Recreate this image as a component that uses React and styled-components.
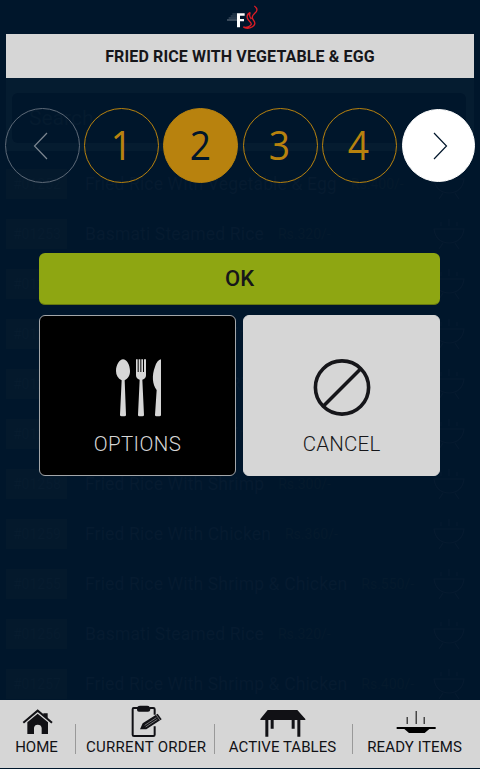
import React from "react";
import styled, { createGlobalStyle } from "styled-components";

const GlobalStyle = createGlobalStyle`
  * { box-sizing: border-box; }
  body { margin: 0; background: #00162b; font-family: Roboto, "Liberation Sans", sans-serif; }
  button { font: inherit; padding: 0; margin: 0; border: 0; background: none; }
  svg { display: block; flex: none; }
`;

const Screen = styled.div`
  position: relative;
  width: 480px;
  height: 769px;
  overflow: hidden;
  background: #00162b;
  display: flex;
  flex-direction: column;
`;

const Backdrop = styled.div`
  height: 700px;
  padding: 78px 6px 0;
  overflow: hidden;
  color: #061b30;
`;

const SearchPanel = styled.div`
  height: 73px;
  padding: 15px 8px 8px 6px;
  background: #051c30;
`;

const SearchField = styled.div`
  height: 50px;
  padding-left: 17px;
  border-radius: 6px;
  background: #00162b;
  color: #051b2f;
  font-size: 21px;
  line-height: 50px;
`;

const DishList = styled.div`
  padding-top: 8px;
`;

const DishRow = styled.div`
  display: flex;
  align-items: center;
  height: 50px;
`;

const DishCode = styled.div`
  flex: none;
  width: 61px;
  height: 30px;
  margin-right: 18px;
  padding-left: 7px;
  background: #04192c;
  color: #071c2f;
  font-size: 14px;
  line-height: 30px;
`;

const DishName = styled.div`
  font-size: 17.5px;
  line-height: 24px;
  letter-spacing: 0.15px;
  white-space: nowrap;
`;

const DishPrice = styled.div`
  margin-left: 14px;
  color: #051a2d;
  font-size: 14px;
  white-space: nowrap;
`;

const DishIcon = styled.svg`
  margin-left: auto;
  margin-right: 9px;
`;

const Dialog = styled.div`
  position: absolute;
  inset: 0 0 69px 0;
  display: flex;
  flex-direction: column;
`;

const LogoBar = styled.div`
  height: 34px;
  display: flex;
  justify-content: center;
  padding-left: 6px;
`;

const Title = styled.h1`
  margin: 0 6px;
  height: 44px;
  background: #d6d6d6;
  color: #16161a;
  font-size: 16px;
  font-weight: 700;
  line-height: 45px;
  letter-spacing: 0.13px;
  text-align: center;
  white-space: nowrap;
`;

const QuantityRow = styled.div`
  margin: 30px 5px 0;
  display: flex;
  align-items: center;
  gap: 4.2px;
  height: 75px;
`;

const Round = styled.button`
  display: flex;
  align-items: center;
  justify-content: center;
  flex: none;
  width: ${(p) => p.$size || 75}px;
  height: ${(p) => p.$size || 75}px;
  border-radius: 50%;
  border: 1px solid ${(p) => p.$line};
  background: ${(p) => p.$fill || "transparent"};
  color: ${(p) => p.$ink};

  &:last-child {
    margin-left: auto;
  }
`;

const Digit = styled.span`
  font-family: "Open Sans", "Noto Sans", sans-serif;
  font-size: 40px;
  line-height: 54px;
  margin: 0 1px 1px 0;
  transform: scaleX(0.93);
`;

const Actions = styled.div`
  margin: 70px 40px 0 39px;
  display: grid;
  grid-template-columns: 196.5px 197px;
  column-gap: 7.5px;
  row-gap: 10px;
  grid-template-rows: 51.5px 161.5px;
`;

const OkButton = styled.button`
  grid-column: 1 / -1;
  border-radius: 6px;
  border-bottom: 1px solid #66770f;
  background: #8ea612;
  color: #16161a;
  font-size: 22px;
  font-weight: 500;
  line-height: 51px;
`;

const Tile = styled.button`
  display: flex;
  flex-direction: column;
  align-items: center;
  padding-top: 43px;
  border-radius: 6px;
  border: 1px solid ${(p) => (p.$dark ? "#a3a6a9" : "#d6d6d6")};
  background: ${(p) => (p.$dark ? "#000" : "#d6d6d6")};
  color: ${(p) => (p.$dark ? "#d6d6d6" : "#16161a")};
`;

const TileLabel = styled.span`
  margin-top: 12px;
  font-size: 20.5px;
  font-weight: 300;
  line-height: 30px;
  letter-spacing: ${(p) => p.$spacing}px;
  margin-right: -${(p) => p.$spacing}px;
`;

const NavBar = styled.nav`
  display: flex;
  height: 68px;
  background: #d6d6d6;
  color: #111115;
`;

const NavItem = styled.a`
  display: flex;
  flex-direction: column;
  align-items: center;
  width: ${(p) => p.$width}px;
  padding-left: ${(p) => p.$left || 0}px;
  padding-right: ${(p) => p.$right || 0}px;
`;

const NavLabel = styled.span`
  font-size: 15px;
  line-height: 20px;
  letter-spacing: ${(p) => p.$spacing}px;
  margin-right: -${(p) => p.$spacing}px;
  white-space: nowrap;
`;

const Divider = styled.div`
  width: 1px;
  height: 30px;
  margin-top: 24px;
  background: #999;
`;

const dishes = [
  ["#01252", "Fried Rice With Vegetable & Egg", "Rs.400/-"],
  ["#01253", "Basmati Steamed Rice", "Rs.320/-"],
  ["#01254", "Fried Rice With Shrimp", "Rs.300/-"],
  ["#01255", "Fried Rice With Shrimp", "Rs.300/-"],
  ["#01256", "Basmati Steamed Rice", "Rs.320/-"],
  ["#01257", "Fried Rice With Shrimp", "Rs.300/-"],
  ["#01258", "Fried Rice With Shrimp", "Rs.300/-"],
  ["#01259", "Fried Rice With Chicken", "Rs.360/-"],
  ["#01255", "Fried Rice With Shrimp & Chicken", "Rs.550/-"],
  ["#01256", "Basmati Steamed Rice", "Rs.320/-"],
  ["#01257", "Fried Rice With Shrimp & Chicken", "Rs.400/-"],
];

const Bowl = () => (
  <DishIcon width="32" height="30" viewBox="0 0 32 30" fill="none" stroke="#061b30" strokeWidth="1.2">
    <path d="M1 10H31C30 19 24 24 16 24S2 19 1 10ZM10 24L6 30M22 24L26 30M8 3V7M16 0V7M24 3V7" />
  </DishIcon>
);

const Logo = () => (
  <svg width="36" height="34" viewBox="0 0 108 102" fill="none">
    <g stroke="#a9b3bd" strokeWidth="2">
      <path d="M22 42H36" opacity=".5" />
      <path d="M17 48H36" opacity=".6" />
      <path d="M11 54H36" opacity=".7" />
      <path d="M6 60H36" />
    </g>
    <path d="M36 40H59V47H45V57H57V64H45V82H36Z" fill="#fff" />
    <path
      d="M88 18C99 26 98 34 88 41C80 48 80 54 85 60C91 67 92 75 81 81C73 86 61 86 55 81C65 84 76 80 79 73C80 67 69 63 67 54C65 46 70 40 76 37M76 37C72 45 73 51 79 57"
      stroke="#db1d25"
      strokeWidth="4"
    />
  </svg>
);

const Chevron = ({ d }) => (
  <svg width="20" height="28" viewBox="0 0 20 28" fill="none" stroke="currentColor" strokeWidth="1.2">
    <path d={d} />
  </svg>
);

const Cutlery = () => (
  <svg width="46" height="58" viewBox="252 161 138 174" overflow="visible" fill="#d6d6d6">
    <path d="M279 162C290 162 300 179 300 197C300 211 294 219 284 225L288 329Q288 333 283 333H275Q270 333 270 329L275 225C264 219 258 210 258 197C258 178 269 162 279 162Z" />
    <path d="M318 162H323V200H326V162H331V200H334V162H339V200H342V162H348V210Q348 220 337 223L342 329Q342 333 337 333H328Q324 333 324 329L329 223Q318 220 318 210Z" />
    <path d="M393 162V329Q393 333 388 333H379Q375 333 375 329L380 254C367 236 365 211 375 184Q381 165 393 162Z" />
  </svg>
);

const Forbidden = () => (
  <svg width="58" height="58" viewBox="0 0 58 58" fill="none" stroke="#16161a" strokeWidth="3.6">
    <circle cx="29" cy="28.5" r="26.6" />
    <path d="M10.5 47L47.5 10" />
  </svg>
);

const Home = () => (
  <svg width="36" height="37" viewBox="58 15 108 111">
    <path d="M71 83L114 47L157 83" fill="none" stroke="#111115" strokeWidth="6" />
    <path d="M131 55H144V72L131 61ZM83 82L114 56L145 82V117H126V99Q125 89 114 89Q104 89 103 99V117H83Z" fill="#111115" />
  </svg>
);

const Order = () => (
  <svg width="34" height="37" viewBox="388 15 102 111">
    <path d="M415 39H402Q399 39 399 43V119Q399 123 403 123H461Q465 123 465 119V94M449 39H461Q465 39 465 43V59" fill="none" stroke="#111115" strokeWidth="6" />
    <path d="M413 36Q416 32 422 32H442Q448 32 450 36L452 44Q451 50 445 50H418Q412 50 412 44Z" fill="#111115" />
    <path d="M421 103L429 85L474 56L486 73L440 103Z" fill="#111115" />
    <path d="M435 91L470 68M438 96L473 73M470 60L481 76" stroke="#d6d6d6" strokeWidth="1.5" />
  </svg>
);

const Table = () => (
  <svg width="46" height="37" viewBox="59 15 138 111" fill="#111115">
    <path d="M82 45H171L195 72V75H180V125H171V75H163V101H154V75H100V101H91V75H84V125H75V75H60V72Z" />
  </svg>
);

const Steaming = () => (
  <svg width="40" height="37" viewBox="466 15 120 111" overflow="visible" fill="#000">
    <path d="M471 96H588V102H569L555 114H508L494 102H471ZM501 66H504V87H501ZM528 48H531V87H528ZM552 66H555V87H552Z" />
  </svg>
);

export default function App() {
  return (
    <>
      <GlobalStyle />
      <Screen>
        <Backdrop>
          <SearchPanel>
            <SearchField>Search</SearchField>
          </SearchPanel>
          <DishList>
            {dishes.map(([code, name, price], i) => (
              <DishRow key={i}>
                <DishCode>{code}</DishCode>
                <DishName>{name}</DishName>
                <DishPrice>{price}</DishPrice>
                <Bowl />
              </DishRow>
            ))}
          </DishList>
        </Backdrop>

        <Dialog>
          <LogoBar>
            <Logo />
          </LogoBar>
          <Title>FRIED RICE WITH VEGETABLE &amp; EGG</Title>
          <QuantityRow>
            <Round $line="#5d6977" $ink="#7d8791" aria-label="Previous">
              <Chevron d="M14 1L1.5 14L14 27" />
            </Round>
            <Round $line="#b8820e" $ink="#b8820e"><Digit>1</Digit></Round>
            <Round $line="#b8820e" $fill="#b8820e" $ink="#00162b"><Digit>2</Digit></Round>
            <Round $line="#b8820e" $ink="#b8820e"><Digit>3</Digit></Round>
            <Round $line="#b8820e" $ink="#b8820e"><Digit>4</Digit></Round>
            <Round $size={73} $line="#fff" $fill="#fff" $ink="#00162b" aria-label="Next">
              <Chevron d="M5 1L17.5 14L5 27" />
            </Round>
          </QuantityRow>
          <Actions>
            <OkButton>OK</OkButton>
            <Tile $dark>
              <Cutlery />
              <TileLabel $spacing={0.4}>OPTIONS</TileLabel>
            </Tile>
            <Tile>
              <Forbidden />
              <TileLabel $spacing={0.2}>CANCEL</TileLabel>
            </Tile>
          </Actions>
        </Dialog>

        <NavBar>
          <NavItem $width={75} $right={2}>
            <Home />
            <NavLabel $spacing={0}>HOME</NavLabel>
          </NavItem>
          <Divider />
          <NavItem $width={138} $left={2}>
            <Order />
            <NavLabel $spacing={0.3}>CURRENT ORDER</NavLabel>
          </NavItem>
          <Divider />
          <NavItem $width={137} $right={2}>
            <Table />
            <NavLabel $spacing={0.05}>ACTIVE TABLES</NavLabel>
          </NavItem>
          <Divider />
          <NavItem $width={127} $right={4}>
            <Steaming />
            <NavLabel $spacing={0.15}>READY ITEMS</NavLabel>
          </NavItem>
        </NavBar>
      </Screen>
    </>
  );
}
